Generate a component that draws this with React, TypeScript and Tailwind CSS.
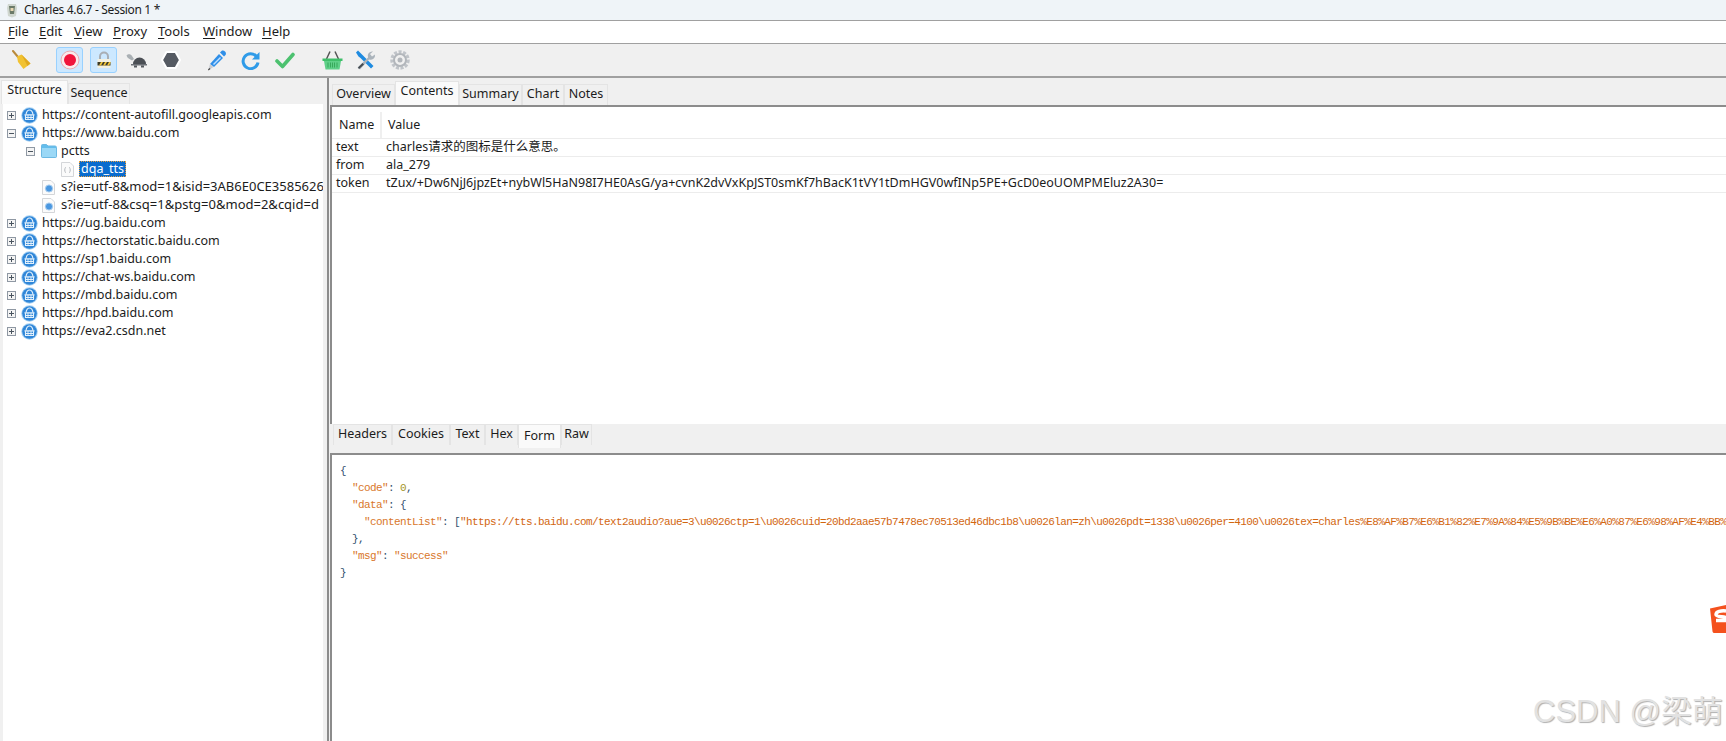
import React from "react";

const F = "font-['Noto_Sans','Noto_Sans_CJK_SC',sans-serif]";

function Globe() {
  return (
    <svg width="17" height="17" viewBox="0 0 17 17" className="shrink-0">
      <circle cx="8.500" cy="8.500" r="8.300" fill="#a8d2f3" />
      <circle cx="8.500" cy="8.500" r="7.300" fill="#2f86d8" />
      <path d="M5 7.500C5.500 4.500 7 3 8.500 3S11.500 4.500 12 7.500" fill="none" stroke="#e3f1fc" strokeWidth="1.200" />
      <path d="M3.500 7.800h10M4.500 10.500h8" stroke="#e3f1fc" strokeWidth="1.200" />
      <path d="M4.500 8v4.500h8V8" fill="none" stroke="#e3f1fc" strokeWidth="1.100" />
      <path d="M7 8v4.500M10 8v4.500" stroke="#e3f1fc" strokeWidth="0.900" />
    </svg>
  );
}
function Exp({ open }: { open?: boolean }) {
  return (
    <svg width="9" height="9" viewBox="0 0 9 9" className="shrink-0">
      <rect x="0.5" y="0.5" width="8" height="8" fill="#f4f4f4" stroke="#8f98a3" />
      <path d="M2 4.500h5" stroke="#4a5560" />
      {!open && <path d="M4.500 2v5" stroke="#4a5560" />}
    </svg>
  );
}
function Doc({ dot }: { dot?: boolean }) {
  return (
    <svg width="13" height="15" viewBox="0 0 13 15" className="shrink-0">
      <path d="M.5.5h8.500l3.500 3.500v10.500h-12z" fill="#fbfbfb" stroke="#d4d6d9" />
      {dot ? (
        <circle cx="7" cy="8.500" r="3.600" fill="#4a97e0" stroke="#a9cdee" />
      ) : (
        <path d="M5 5.500c-1 0-1 .6-1 1.500s-.6 1-.8 1c.2 0 .8 0 .8 1s0 1.500 1 1.500M8 5.500c1 0 1 .6 1 1.500s.6 1 .8 1c-.2 0-.8 0-.8 1s0 1.500-1 1.500" fill="none" stroke="#a8adb2" strokeWidth="0.8" />
      )}
    </svg>
  );
}
function Folder() {
  return (
    <svg width="16" height="14" viewBox="0 0 16 14" className="shrink-0">
      <path d="M.5 1.500a1 1 0 0 1 1-1h4l1.500 1.500h7a1.500 1.500 0 0 1 1.500 1.500v9a1 1 0 0 1-1 1h-13a1 1 0 0 1-1-1z" fill="#63bdec" stroke="#6cb9e3" />
      <path d="M1 4h14v9H1z" fill="#9bd8f6" />
    </svg>
  );
}

function Tree({ children, className = "" }: { children: React.ReactNode; className?: string }) {
  return <div className={`flex h-[18px] items-center whitespace-nowrap ${className}`}>{children}</div>;
}
function Host({ name, open }: { name: string; open?: boolean }) {
  return (
    <Tree className="pl-[4px]">
      <Exp open={open} />
      <span className="ml-[5px]"><Globe /></span>
      <span className="ml-[4px]">{name}</span>
    </Tree>
  );
}

function Tab({ label, active, w, u }: { label: string; active?: boolean; w: number; u?: boolean }) {
  const base = "flex shrink-0 items-center justify-center border border-[#e4e4e4] border-b-0 text-[12.5px] leading-none";
  return (
    <div
      style={{ width: w }}
      className={
        active
          ? `${base} h-[24px] bg-[#fafafa] ${u ? "self-start" : "self-end pb-[4px]"}`
          : `${base} ${u ? "h-[21px] self-start bg-[#f0f0f0] pb-[1px]" : "h-[21px] self-end bg-[#f0f0f0] pb-[1px]"}`
      }
    >
      {label}
    </div>
  );
}

function Menu({ c, rest, w }: { c: string; rest: string; w: number }) {
  return (
    <span style={{ width: w }} className="shrink-0">
      <span className="underline underline-offset-2">{c}</span>
      {rest}
    </span>
  );
}

function Row({ name, value }: { name: string; value: string }) {
  return (
    <div className="flex h-[18px] items-center whitespace-nowrap border-b border-[#ececec] pb-[1px]">
      <span className="w-[54px] shrink-0 pl-[4px]">{name}</span>
      <span>{value}</span>
    </div>
  );
}

const URL_TEXT =
  '"https://tts.baidu.com/text2audio?aue=3\\u0026ctp=1\\u0026cuid=20bd2aae57b7478ec70513ed46dbc1b8\\u0026lan=zh\\u0026pdt=1338\\u0026per=4100\\u0026tex=charles%E8%AF%B7%E6%B1%82%E7%9A%84%E5%9B%BE%E6%A0%87%E6%98%AF%E4%BB%80%E4%B9%88%E6%84%8F%E6%80%9D';

function Key({ t }: { t: string }) {
  return <span className="text-[#d9772b]">{t}</span>;
}
function P({ t }: { t: string }) {
  return <span className="text-[#33506e]">{t}</span>;
}

export default function App() {
  return (
    <div className={`relative flex h-[741px] w-[1726px] flex-col overflow-hidden bg-[#f0f0f0] text-[12.5px] text-[#1c1c1c] ${F}`}>
      {/* title bar */}
      <div className="flex h-[21px] shrink-0 items-center border-b border-[#a0a0a0] bg-[#eff4f8] pl-[6px]">
        <svg width="12" height="15" viewBox="0 0 12 15">
          <path d="M2 1h8l1 4-1 8-4 1.500-4-1.500-1-8z" fill="#cfd6cf" />
          <path d="M3 3h6l-1 8H4z" fill="#6b7a68" />
          <path d="M4.500 5h3v3h-3z" fill="#e9d9b5" />
        </svg>
        <span className="ml-[6px] text-[12px] tracking-[-0.33px]">Charles 4.6.7 - Session 1 *</span>
      </div>
      {/* menu */}
      <div className="flex h-[23px] shrink-0 items-center border-b border-[#a0a0a0] bg-white pl-[8px] text-[13px]">
        <Menu c="F" rest="ile" w={31} />
        <Menu c="E" rest="dit" w={35} />
        <Menu c="V" rest="iew" w={39} />
        <Menu c="P" rest="roxy" w={45} />
        <Menu c="T" rest="ools" w={45} />
        <Menu c="W" rest="indow" w={59} />
        <Menu c="H" rest="elp" w={40} />
      </div>
      {/* toolbar */}
      <div className="flex h-[34px] shrink-0 items-center border-b-2 border-[#a0a0a0] bg-[#f0f0f0]">
        <svg width="20" height="20" viewBox="0 0 20 20" className="ml-[12px]">
          <path d="M1 1l5 6" stroke="#b98a3c" strokeWidth="2" strokeLinecap="round" />
          <path d="M5 6.500 9.500 4.500l9 9-7 5.500-5.500-7z" fill="#f1c232" />
          <path d="M9.500 4.500l9 9-3 2.500z" fill="#e0a91f" />
        </svg>
        <div className="ml-[24px] flex h-[26px] w-[27px] items-center justify-center rounded-[3px] border border-[#99d1ff] bg-[#cce8ff]">
          <svg width="20" height="20" viewBox="0 0 20 20">
            <circle cx="10" cy="10" r="9" fill="#fbeaec" stroke="#e8aab2" />
            <circle cx="10" cy="10" r="6" fill="#f0143c" />
          </svg>
        </div>
        <div className="ml-[7px] flex h-[26px] w-[27px] items-center justify-center rounded-[3px] border border-[#99d1ff] bg-[#cce8ff]">
          <svg width="16" height="18" viewBox="0 0 16 18">
            <path d="M4 8V5.500a4 4 0 0 1 8 0V8" fill="none" stroke="#a9aeb4" strokeWidth="2" />
            <path d="M1.500 8h13v9h-13z" fill="#f3f0e0" />
            <path d="M1.500 11h13v3.500h-13z" fill="#3b3b2a" />
            <path d="M3 14.500 5 11h2l-2 3.500zM7 14.500 9 11h2l-2 3.500zM11 14.500l2-3.500h1.500v1l-1.500 2.500z" fill="#f0c53a" />
          </svg>
        </div>
        <svg width="21" height="15" viewBox="0 0 21 15" className="ml-[9px]">
          <path d="M7 11a6.500 6.500 0 0 1 13 0z" fill="#4b4f55" />
          <path d="M5 11h16v1.500H5z" fill="#6b6f75" />
          <path d="M.5 2.500C2 .5 5 1 6 3l2 3-2 1.500C4 6 1 5 .5 2.500z" fill="#aab0b4" />
          <path d="M8 12.500h3v2H8zM15 12.500h3v2h-3z" fill="#55595e" />
        </svg>
        <svg width="20" height="20" viewBox="0 0 20 20" className="ml-[14px]">
          <path d="M5.500 2h9L19 10l-4.500 8h-9L1 10z" fill="#555a62" stroke="#fff" strokeWidth="2" />
        </svg>
        <svg width="20" height="21" viewBox="0 0 20 21" className="ml-[26px]">
          <path d="M12 4l4 4-9 9-4-3z" fill="#2f8fe8" />
          <path d="M13 2.500l1.500-1.500c1-.8 2.500-.5 3.500.5s1.300 2.500.5 3.500L17 6.500z" fill="#2f8fe8" />
          <path d="M3 14l3.500 3L2.500 19.500 1.500 19z" fill="#c9ccd1" />
          <path d="M1 19.500l1.500-1.500 1 1-2 1.500z" fill="#444" />
          <path d="M13 7l1 1-7 7-1-1z" fill="#bfe0ff" />
        </svg>
        <svg width="19" height="19" viewBox="0 0 19 19" className="ml-[14px]">
          <path d="M15.500 5.500A7.500 7.500 0 1 0 17 11.500" fill="none" stroke="#2f9be8" strokeWidth="3" />
          <path d="M11 8.500h7.500V1z" fill="#2f9be8" />
        </svg>
        <svg width="20" height="17" viewBox="0 0 20 17" className="ml-[15px]">
          <path d="M2 9l5.500 5.500L18 2.500" fill="none" stroke="#4cc16f" strokeWidth="3.600" strokeLinejoin="round" strokeLinecap="round" />
        </svg>
        <svg width="21" height="21" viewBox="0 0 21 21" className="ml-[27px]">
          <path d="M4.500 9 8 1.500M16.500 9 13 1.500" stroke="#555" strokeWidth="1.500" />
          <path d="M.5 8.500h20v2.500H.5z" fill="#3fbf69" />
          <path d="M2 11h17l-1.500 8.500h-14z" fill="#5fd088" />
          <path d="M6 12.500v5M8.500 12.500v5M10.500 12.500v5M12.500 12.500v5M15 12.500v5" stroke="#37a85b" />
        </svg>
        <svg width="21" height="21" viewBox="0 0 21 21" className="ml-[12px]">
          <path d="M1 2.500 3 .5 8 5.500 18.500 16l-2.500 2.500L5.500 8 3.500 6.500z" fill="#1f8be0" />
          <path d="M13 7.500A4.500 4.500 0 0 1 18 1.500l-3 2.500 2 2.500 3-2A4.500 4.500 0 0 1 14 9.500L5 19.500l-2.500-2z" fill="#aab3bb" />
          <path d="M7.500 13 3 17.500l1 1.500L9 14.500z" fill="#444a50" />
        </svg>
        <svg width="20" height="20" viewBox="0 0 20 20" className="ml-[14px]">
          <circle cx="10" cy="10" r="8" fill="none" stroke="#c0c4c9" strokeWidth="3.500" strokeDasharray="3 1.500" />
          <circle cx="10" cy="10" r="6" fill="none" stroke="#b2b6bb" strokeWidth="2" />
          <circle cx="10" cy="10" r="2.500" fill="#b2b6bb" />
        </svg>
      </div>

      {/* main */}
      <div className="flex min-h-0 flex-1">
        {/* left */}
        <div className="flex w-[327px] shrink-0 flex-col">
          <div className="flex h-[26px] shrink-0 pl-[1px]">
            <Tab label="Structure" w={67} active />
            <Tab label="Sequence" w={62} />
          </div>
          <div className="ml-[3px] mr-[4px] flex-1 overflow-hidden bg-white pt-[2px]">
            <Host name="https://content-autofill.googleapis.com" />
            <Host name="https://www.baidu.com" open />
            <Tree className="pl-[23px]">
              <Exp open />
              <span className="ml-[6px]"><Folder /></span>
              <span className="ml-[4px]">pctts</span>
            </Tree>
            <Tree className="pl-[58px]">
              <Doc />
              <span className="ml-[5px] flex h-[16px] items-center border border-dotted border-[#e8a040] bg-[#0a6cce] px-[1px] text-white">dqa_tts</span>
            </Tree>
            <Tree className="pl-[39px]">
              <Doc dot />
              <span className="ml-[6px] text-[13px]">s?ie=utf-8&amp;mod=1&amp;isid=3AB6E0CE35856262</span>
            </Tree>
            <Tree className="pl-[39px]">
              <Doc dot />
              <span className="ml-[6px] text-[13px]">s?ie=utf-8&amp;csq=1&amp;pstg=0&amp;mod=2&amp;cqid=d</span>
            </Tree>
            <Host name="https://ug.baidu.com" />
            <Host name="https://hectorstatic.baidu.com" />
            <Host name="https://sp1.baidu.com" />
            <Host name="https://chat-ws.baidu.com" />
            <Host name="https://mbd.baidu.com" />
            <Host name="https://hpd.baidu.com" />
            <Host name="https://eva2.csdn.net" />
          </div>
        </div>

        {/* right */}
        <div className="flex min-w-0 flex-1 flex-col border-l-2 border-[#8c8c8c] pl-[1px]">
          <div className="flex h-[27px] shrink-0 pl-[2px] pt-[3px]">
            <Tab label="Overview" w={63} />
            <Tab label="Contents" w={64} active />
            <Tab label="Summary" w={63} />
            <Tab label="Chart" w={42} />
            <Tab label="Notes" w={44} />
          </div>
          {/* top pane */}
          <div className="h-[319px] shrink-0 overflow-hidden border-l-2 border-t-2 border-[#8c8c8c] bg-white">
            <div className="flex h-[32px] items-center border-b border-[#ececec] pt-[5px]">
              <span className="flex h-full w-[50px] items-center border-r-2 border-[#efefef] pl-[7px]">Name</span>
              <span className="pl-[6px]">Value</span>
            </div>
            <Row name="text" value="charles请求的图标是什么意思。" />
            <Row name="from" value="ala_279" />
            <Row name="token" value="tZux/+Dw6NjJ6jpzEt+nybWl5HaN98I7HE0AsG/ya+cvnK2dvVxKpJST0smKf7hBacK1tVY1tDmHGV0wfINp5PE+GcD0eoUOMPMEluz2A30=" />
          </div>
          {/* bottom tabs */}
          <div className="flex h-[29px] shrink-0 pl-[3px]">
            <Tab label="Headers" w={59} u />
            <Tab label="Cookies" w={58} u />
            <Tab label="Text" w={35} u />
            <Tab label="Hex" w={33} u />
            <Tab label="Form" w={43} u active />
            <Tab label="Raw" w={31} u />
          </div>
          {/* bottom pane */}
          <div className="flex-1 overflow-hidden border-l-2 border-t-2 border-[#8c8c8c] bg-white pl-[8px] pt-[8px] font-['Liberation_Mono',monospace] text-[11px] leading-[17px] tracking-[-0.6px] whitespace-pre">
            <div><P t="{" /></div>
            <div>  <Key t={'"code"'} /><P t=": " /><span className="text-[#a3951f]">0</span><P t="," /></div>
            <div>  <Key t={'"data"'} /><P t=": {" /></div>
            <div>    <Key t={'"contentList"'} /><P t=": [" /><span className="text-[#d2660f]">{URL_TEXT}</span></div>
            <div>  <P t="}," /></div>
            <div>  <Key t={'"msg"'} /><P t=": " /><Key t={'"success"'} /></div>
            <div><P t="}" /></div>
          </div>
        </div>
      </div>

      {/* floating badge at the page edge */}
      <div className="absolute left-[1710px] top-[605px]">
        <svg width="16" height="28" viewBox="0 0 16 28">
          <path d="M0 3.500 16 0v28H4.500a2 2 0 0 1-2-1.600z" fill="#f4511e" />
          <path d="M16 6c-5-.5-10 .5-10 3.500S16 11 16 13v2.500H6" fill="none" stroke="#fff" strokeWidth="3.500" />
        </svg>
      </div>
      {/* watermark */}
      <div className="absolute left-[1533px] top-[694px] whitespace-nowrap font-['Liberation_Sans','Noto_Sans_CJK_SC',sans-serif] text-[31px] leading-[36px] text-[#e2e2e2] [text-shadow:1px_1px_1px_#b0b0b0]">
        CSDN @梁萌
      </div>
    </div>
  );
}
